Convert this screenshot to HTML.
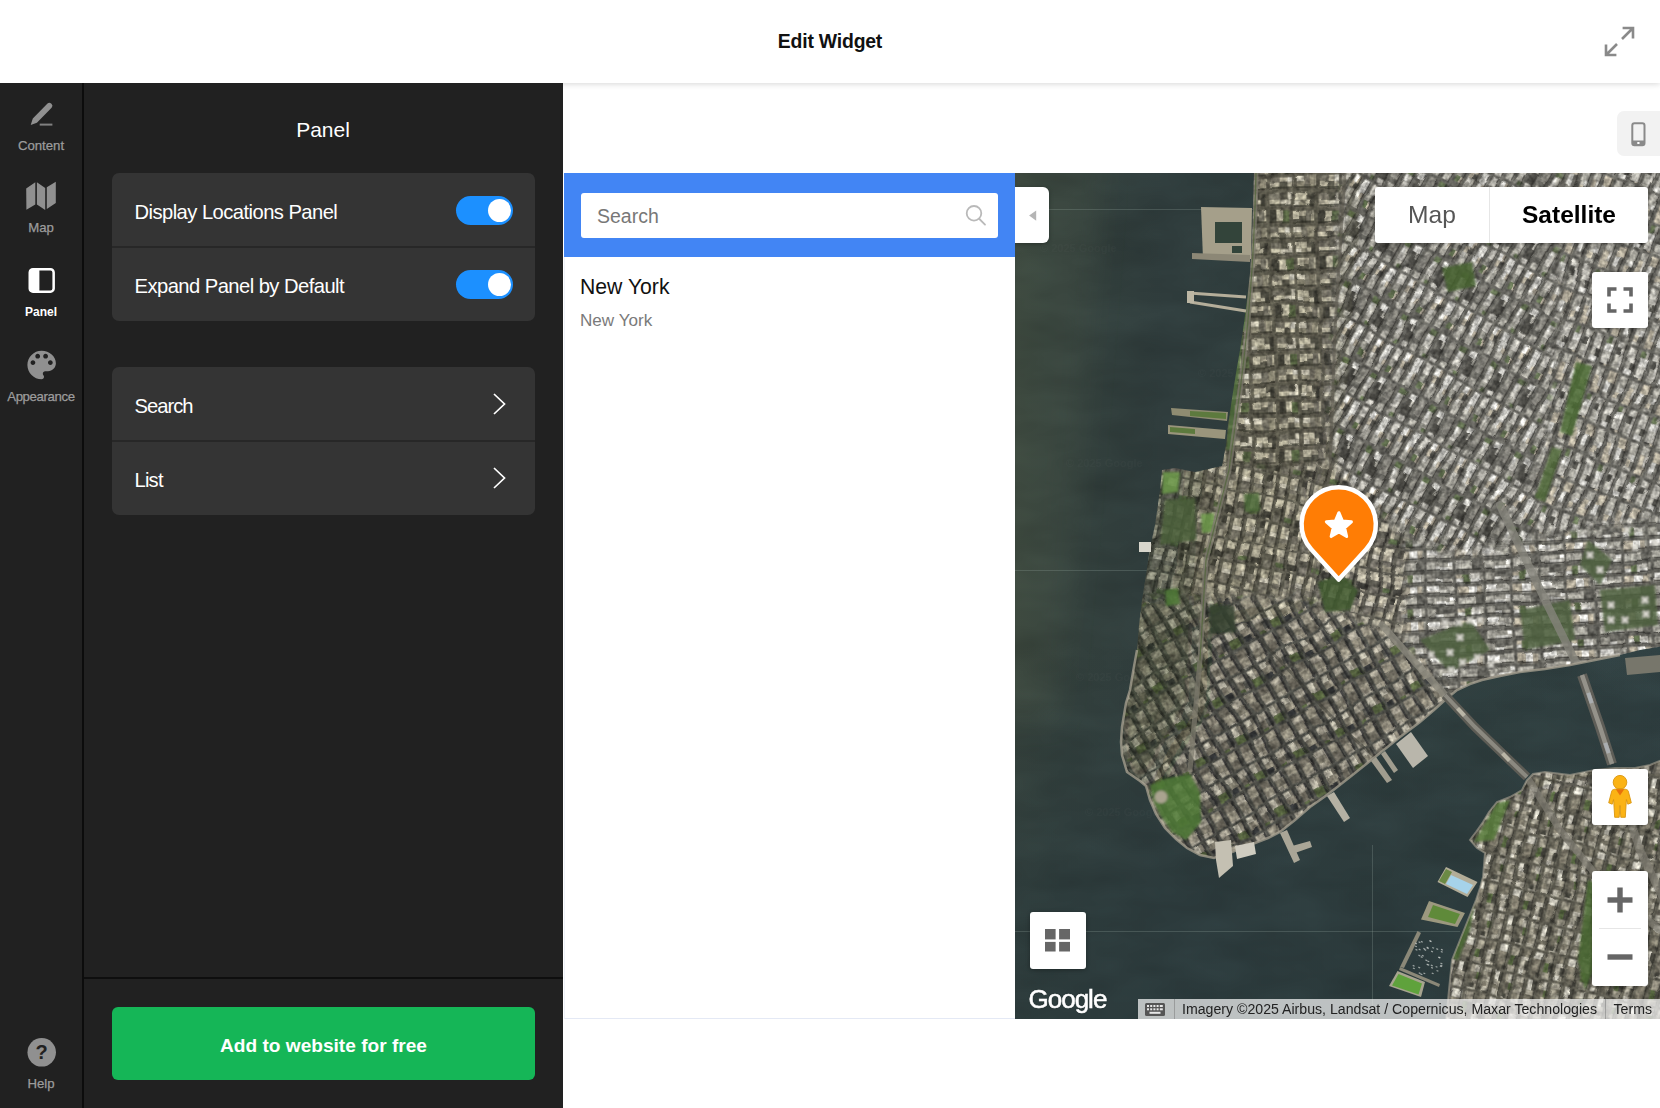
<!DOCTYPE html>
<html lang="en">
<head>
<meta charset="utf-8">
<title>Edit Widget</title>
<style>
*{box-sizing:border-box;margin:0;padding:0}
html,body{width:1660px;height:1108px;overflow:hidden;background:#fff}
body{font-family:"Liberation Sans",sans-serif;position:relative;color:#fff}
.abs{position:absolute}
/* header */
#hdr{left:0;top:0;width:1660px;height:83px;background:#fff;box-shadow:0 1px 6px rgba(0,0,0,.16);z-index:5}
#hdr h1{position:absolute;left:0;width:1660px;top:29px;text-align:center;font-size:19.4px;line-height:24px;font-weight:700;color:#111;letter-spacing:-.2px}
/* sidebar */
#side{left:0;top:83px;width:84px;height:1025px;background:#212121;border-right:2px solid #0c0c0c;z-index:7}
.nav{position:absolute;left:0;width:82px;text-align:center;font-size:13.2px;line-height:16px;color:#9c9c9c;-webkit-text-stroke:.25px #9c9c9c}
.nav.on{color:#fff;font-weight:700;font-size:12px;-webkit-text-stroke:0}
.nav svg{position:absolute;left:0}
/* panel */
#panel{left:83px;top:83px;width:480px;height:1025px;background:#212121;z-index:6}
#panel h2{position:absolute;left:0;width:480px;top:32px;text-align:center;font-size:21px;line-height:30px;font-weight:400;color:#fff}
.card{position:absolute;left:29px;width:423px;height:147.5px;background:#343434;border-radius:7px;overflow:hidden}
.row{position:absolute;left:0;width:423px;height:73px}
.row.r2{top:74px}
.card .sep{position:absolute;left:0;top:73px;width:423px;height:1.5px;background:#272727}
.row span{position:absolute;left:22.5px;top:26px;font-size:20.2px;line-height:26px;color:#fff;white-space:nowrap;letter-spacing:-.55px}
.tog{position:absolute;left:344px;top:22.7px;width:57px;height:29px;border-radius:15px;background:#1c90ff}
.tog i{position:absolute;right:2.5px;top:3px;width:23px;height:23px;border-radius:50%;background:#fff}
.chev{position:absolute;left:380px;top:25px}
#foot{position:absolute;left:0;top:894px;width:480px;height:1.5px;background:#0e0e0e}
#cta{position:absolute;left:29px;top:924px;width:423px;height:73px;border-radius:6px;background:#15b657;color:#fff;font-weight:700;font-size:19.1px;line-height:73px;text-align:center;padding-top:2px}
/* preview */
#mob{left:1616.5px;top:111px;width:50px;height:45px;border-radius:7px;background:#f2f2f2}
#wpanel{left:564px;top:173px;width:451px;height:846px;background:#fff;border-bottom:1px solid #e4e9f5;border-left:1px solid #eef1f8}
#whead{left:564px;top:173px;width:451px;height:84px;background:#4285f4}
#winput{left:581px;top:192.5px;width:417px;height:45px;border-radius:3px;background:#fff}
#winput span{position:absolute;left:16px;top:11px;font-size:19.5px;line-height:24px;color:#777}
#map{left:1015px;top:173px;width:645px;height:846px;overflow:hidden;background:#2f3f3c}
.loc1{left:580px;top:274px;font-size:21.2px;line-height:26px;color:#111;white-space:nowrap}
.loc2{left:580px;top:310.5px;font-size:17.1px;line-height:20px;color:#7a7a7a;white-space:nowrap}
.mbtn{position:absolute;background:#fff;border-radius:3px;box-shadow:0 1px 4px rgba(0,0,0,.3)}
</style>
</head>
<body>
<div id="hdr" class="abs"><h1>Edit Widget</h1>
<svg class="abs" style="left:1603px;top:25px" width="34" height="34" viewBox="0 0 34 34" fill="none" stroke="#8a8a8a" stroke-width="2.6" stroke-linecap="butt" stroke-linejoin="miter"><path d="M19 14 30 3M19.600 3H30V13.400M14 19 3 30M3 19.600V30H13.400"/></svg>
</div>

<div id="side" class="abs">
<svg class="abs" style="left:0;top:0" width="82" height="340" viewBox="0 83 82 340">
<path d="M30.700 124.900 32.800 118.600 47.500 103.600a2.550 2.550 0 0 1 3.600 0l0.500 0.500a2.550 2.550 0 0 1 0 3.600L36.900 122.800z" fill="#909090"/>
<rect x="39.700" y="123.600" width="12.700" height="2" fill="#909090" opacity=".85"/>
<path d="M26.200 188.400 35.300 182.300V204.600L26.400 209.800zM36.900 182.300 45.200 188V210L36.900 204.600zM46.800 187.200 55.800 181.700V203L46.800 209.100z" fill="#909090"/>
<rect x="29.750" y="269.250" width="23.900" height="22.400" rx="3.200" fill="none" stroke="#fff" stroke-width="2.500"/>
<path d="M32 269h7.400v23H32a3 3 0 0 1-3-3v-17a3 3 0 0 1 3-3z" fill="#fff"/>
<g transform="translate(22.650 345.950) scale(1.583)"><path fill="#909090" d="M12 3c-4.970 0-9 4.030-9 9s4.030 9 9 9c.83 0 1.500-.67 1.500-1.500 0-.39-.15-.74-.39-1.010-.23-.26-.38-.61-.38-.99 0-.83.670-1.500 1.500-1.500H16c2.760 0 5-2.240 5-5 0-4.420-4.030-8-9-8zm-5.500 9c-.83 0-1.500-.67-1.500-1.500S5.670 9 6.500 9 8 9.670 8 10.500 7.330 12 6.500 12zm3-4C8.670 8 8 7.330 8 6.500S8.670 5 9.500 5s1.500.67 1.500 1.500S10.330 8 9.500 8zm5 0c-.83 0-1.500-.67-1.500-1.500S13.670 5 14.500 5s1.500.67 1.500 1.500S15.330 8 14.500 8zm3 4c-.83 0-1.500-.67-1.500-1.500S16.670 9 17.500 9s1.500.67 1.500 1.500-.67 1.500-1.500 1.500z"/></g>
</svg>
<div class="nav " style="top:55px;">Content</div>
<div class="nav " style="top:136.5px;">Map</div>
<div class="nav on" style="top:221.3px;">Panel</div>
<div class="nav " style="top:305.5px;letter-spacing:-.35px">Appearance</div>
<svg class="abs" style="left:26px;top:954px" width="32" height="32" viewBox="26 1037 32 32"><circle cx="41.700" cy="1052.350" r="14.250" fill="#909090"/><text x="41.700" y="1059.300" text-anchor="middle" font-family="Liberation Sans, sans-serif" font-weight="700" font-size="20" fill="#212121">?</text></svg>
<div class="nav " style="top:992.5px;">Help</div>
</div>

<div id="panel" class="abs">
<h2>Panel</h2>
<div class="card" style="top:90px">
 <div class="row"><span>Display Locations Panel</span><div class="tog"><i></i></div></div>
 <div class="sep"></div>
 <div class="row r2"><span>Expand Panel by Default</span><div class="tog"><i></i></div></div>
</div>
<div class="card" style="top:284.3px">
 <div class="row"><span style="letter-spacing:-1px">Search</span><svg class="chev" width="16" height="24" viewBox="0 0 16 24" fill="none" stroke="#fff" stroke-width="1.7"><path d="M2 2l10.500 10L2 22"/></svg></div>
 <div class="sep"></div>
 <div class="row r2"><span style="letter-spacing:-.8px">List</span><svg class="chev" width="16" height="24" viewBox="0 0 16 24" fill="none" stroke="#fff" stroke-width="1.7"><path d="M2 2l10.500 10L2 22"/></svg></div>
</div>
<div id="foot"></div>
<div id="cta">Add to website for free</div>
</div>

<div id="mob" class="abs"><svg class="abs" style="left:13px;top:9px" width="18" height="28" viewBox="1630 119 18 28"><rect x="1632.300" y="122.200" width="12.200" height="22" rx="2.200" fill="none" stroke="#8a8a8a" stroke-width="2"/><path d="M1632.300 139.500h12.200v2.500a2.200 2.200 0 0 1-2.200 2.200h-7.800a2.200 2.200 0 0 1-2.200-2.200z" fill="#8a8a8a"/><rect x="1637.300" y="141" width="2.200" height="2" fill="#fff"/></svg></div>
<div id="wpanel" class="abs"></div>
<div id="whead" class="abs"></div>
<div id="winput" class="abs"><span>Search</span><svg class="abs" style="left:382px;top:10px" width="26" height="26" viewBox="963 203 26 26" fill="none" stroke="#b9b9b9" stroke-width="1.8"><circle cx="974" cy="213.300" r="7.300"/><path d="M979.400 219 985 224.600" stroke-linecap="round"/></svg></div>
<div class="abs loc1">New York</div>
<div class="abs loc2">New York</div>

<div id="map" class="abs">
<svg width="645" height="846" viewBox="1015 173 645 846" style="position:absolute;left:0;top:0">
<defs>
<linearGradient id="wv" x1="0" x2="0" y1="0" y2="1"><stop offset="0" stop-color="#2c3a3c" stop-opacity="0"/><stop offset=".55" stop-color="#2c3a3c" stop-opacity="0"/><stop offset=".85" stop-color="#2b3a3c" stop-opacity=".75"/><stop offset="1" stop-color="#2b3a3c" stop-opacity=".85"/></linearGradient><linearGradient id="wg" x1="0" x2="1" y1="0" y2="0"><stop offset="0" stop-color="#39443b"/><stop offset=".1" stop-color="#33403c"/><stop offset=".25" stop-color="#2f3c3c"/><stop offset=".7" stop-color="#2f3e3e"/><stop offset="1" stop-color="#304042"/></linearGradient>
<filter id="nz" x="0" y="0" width="100%" height="100%" color-interpolation-filters="sRGB"><feTurbulence type="fractalNoise" baseFrequency=".02 .02" numOctaves="2" seed="11" result="d"/><feDisplacementMap in="SourceGraphic" in2="d" scale="9" xChannelSelector="R" yChannelSelector="G" result="w"/><feTurbulence type="fractalNoise" baseFrequency=".2 .2" numOctaves="2" seed="4" result="n"/><feColorMatrix in="n" type="matrix" values="1.500 0 0 0 -.25  1.500 0 0 0 -.25  1.500 0 0 0 -.25  0 0 0 0 1" result="g"/><feComposite in="w" in2="g" operator="arithmetic" k1=".6" k2=".68" k3="0" k4="0"/></filter>
<filter id="nzw" x="0" y="0" width="100%" height="100%" color-interpolation-filters="sRGB"><feTurbulence type="fractalNoise" baseFrequency=".012 .03" numOctaves="3" seed="9" result="n"/><feColorMatrix in="n" type="matrix" values="1 0 0 0 0  1 0 0 0 0  1 0 0 0 0  0 0 0 0 1" result="g"/><feComposite in="SourceGraphic" in2="g" operator="arithmetic" k1=".24" k2=".88" k3="0" k4="0"/></filter>
<filter id="bl" x="-20%" y="-20%" width="140%" height="140%"><feGaussianBlur stdDeviation="14"/></filter>
<filter id="bs" x="-20%" y="-20%" width="140%" height="140%"><feGaussianBlur stdDeviation="1.200"/></filter>
<clipPath id="land"><polygon points="1254,170 1253,208 1252,240 1250,273 1247,300 1244,323 1240,350 1236,373 1231,405 1228,425 1226,445 1222,466 1195,472 1175,468 1162,470 1160,490 1155,525 1150,548 1146,575 1142,600 1139,625 1137,650 1133,672 1130,690 1126,703 1122,727 1121,742 1122,755 1127,772 1140,781 1146,786 1150,800 1156,814 1165,828 1176,839 1187,848 1200,855 1214,858 1232,852 1255,843 1268,838 1280,832 1295,820 1310,807 1327,795 1350,777 1375,757 1400,737 1420,722 1434,710 1445,700 1457,690 1470,684 1482,680 1500,676 1520,672 1545,669 1570,665 1595,660 1620,655 1640,650 1664,646 1664,170"/><polygon points="1664,759 1650,765 1635,768 1615,768 1595,770 1570,775 1545,772 1533,774 1527,780 1522,790 1510,797 1497,802 1489,812 1483,822 1476,832 1470,840 1477,848 1485,853 1484,865 1483,877 1480,888 1476,900 1470,915 1464,930 1458,945 1452,960 1449,990 1446,1022 1664,1022"/></clipPath>
<pattern id="g1" width="48" height="48" patternUnits="userSpaceOnUse" patternTransform="rotate(-2 1300 300)"><rect width="48" height="48" fill="#5b584f"/><rect x="1.8" y="1.8" width="5.9" height="6.6" fill="#c2bca9"/><rect x="1.8" y="8.4" width="5.9" height="5.8" fill="#d4cfc0"/><rect x="7.7" y="1.8" width="6.2" height="6.2" fill="#c2bca9"/><rect x="7.7" y="8.0" width="6.2" height="6.2" fill="#8f8a7a"/><rect x="13.9" y="1.8" width="4.4" height="6.0" fill="#57554d"/><rect x="13.9" y="7.8" width="4.4" height="6.4" fill="#c2bca9"/><rect x="18.4" y="1.8" width="3.8" height="12.4" fill="#3f3e39"/><rect x="1.8" y="12.2" width="20.4" height="2" fill="#33322d" opacity=".8"/><rect x="1.8" y="17.8" width="7.5" height="7.4" fill="#c2bca9"/><rect x="1.8" y="25.2" width="7.5" height="5.0" fill="#57554d"/><rect x="9.3" y="17.8" width="5.7" height="5.3" fill="#aca694"/><rect x="9.3" y="23.1" width="5.7" height="7.1" fill="#57554d"/><rect x="15.0" y="17.8" width="5.1" height="12.4" fill="#77736a"/><rect x="20.1" y="17.8" width="2.1" height="5.1" fill="#c2bca9"/><rect x="20.1" y="22.9" width="2.1" height="7.3" fill="#aca694"/><rect x="1.8" y="28.2" width="20.4" height="2" fill="#33322d" opacity=".8"/><rect x="1.8" y="33.8" width="8.1" height="5.7" fill="#d4cfc0"/><rect x="1.8" y="39.5" width="8.1" height="6.7" fill="#8f8a7a"/><rect x="9.9" y="33.8" width="5.8" height="12.4" fill="#77736a"/><rect x="15.7" y="33.8" width="5.5" height="12.4" fill="#8f8a7a"/><rect x="21.1" y="33.8" width="1.1" height="12.4" fill="#aca694"/><rect x="1.8" y="44.2" width="20.4" height="2" fill="#33322d" opacity=".8"/><rect x="25.8" y="1.8" width="9.9" height="6.0" fill="#77736a"/><rect x="25.8" y="7.8" width="9.9" height="6.4" fill="#c2bca9"/><rect x="35.7" y="1.8" width="6.9" height="6.6" fill="#57554d"/><rect x="35.7" y="8.4" width="6.9" height="5.8" fill="#d4cfc0"/><rect x="42.6" y="1.8" width="3.6" height="6.7" fill="#d4cfc0"/><rect x="42.6" y="8.5" width="3.6" height="5.7" fill="#d4cfc0"/><rect x="25.8" y="12.2" width="20.4" height="2" fill="#33322d" opacity=".8"/><rect x="25.8" y="17.8" width="6.7" height="12.4" fill="#3f3e39"/><rect x="32.5" y="17.8" width="6.8" height="12.4" fill="#c2bca9"/><rect x="39.4" y="17.8" width="6.8" height="12.4" fill="#566545"/><rect x="25.8" y="28.2" width="20.4" height="2" fill="#33322d" opacity=".8"/><rect x="25.8" y="33.8" width="8.9" height="5.9" fill="#77736a"/><rect x="25.8" y="39.7" width="8.9" height="6.5" fill="#c2bca9"/><rect x="34.7" y="33.8" width="6.8" height="5.3" fill="#c2bca9"/><rect x="34.7" y="39.1" width="6.8" height="7.1" fill="#57554d"/><rect x="41.5" y="33.8" width="4.7" height="5.9" fill="#e2dfd4"/><rect x="41.5" y="39.7" width="4.7" height="6.5" fill="#c2bca9"/><rect x="25.8" y="44.2" width="20.4" height="2" fill="#33322d" opacity=".8"/></pattern><pattern id="g2" width="33" height="66" patternUnits="userSpaceOnUse" patternTransform="rotate(29 1500 350)"><rect width="33" height="66" fill="#62615b"/><rect x="1.5" y="1.5" width="4.6" height="8.1" fill="#e3e2dd"/><rect x="6.1" y="1.5" width="3.4" height="8.1" fill="#b7af9d"/><rect x="1.5" y="9.6" width="3.8" height="6.9" fill="#b7af9d"/><rect x="5.3" y="9.6" width="4.2" height="6.9" fill="#484742"/><rect x="1.5" y="16.6" width="3.6" height="6.1" fill="#bfbdb5"/><rect x="5.1" y="16.6" width="4.4" height="6.1" fill="#9a988f"/><rect x="1.5" y="22.6" width="3.2" height="8.9" fill="#aba9a0"/><rect x="4.7" y="22.6" width="4.8" height="8.9" fill="#aba9a0"/><rect x="7.7" y="1.5" width="1.8" height="30.0" fill="#32312d" opacity=".8"/><rect x="1.5" y="34.5" width="8.0" height="9.0" fill="#86847c"/><rect x="1.5" y="43.5" width="8.0" height="8.6" fill="#86847c"/><rect x="1.5" y="52.1" width="8.0" height="5.4" fill="#65645e"/><rect x="1.5" y="57.5" width="8.0" height="7.0" fill="#aba9a0"/><rect x="7.7" y="34.5" width="1.8" height="30.0" fill="#32312d" opacity=".8"/><rect x="12.5" y="1.5" width="4.2" height="7.8" fill="#d2d1cb"/><rect x="16.7" y="1.5" width="3.8" height="7.8" fill="#d2d1cb"/><rect x="12.5" y="9.3" width="3.7" height="6.5" fill="#d2d1cb"/><rect x="16.2" y="9.3" width="4.3" height="6.5" fill="#d2d1cb"/><rect x="12.5" y="15.8" width="3.8" height="6.1" fill="#d2d1cb"/><rect x="16.3" y="15.8" width="4.2" height="6.1" fill="#b7af9d"/><rect x="12.5" y="21.8" width="3.6" height="9.3" fill="#aba9a0"/><rect x="16.1" y="21.8" width="4.4" height="9.3" fill="#aba9a0"/><rect x="18.7" y="1.5" width="1.8" height="30.0" fill="#32312d" opacity=".8"/><rect x="12.5" y="34.5" width="8.0" height="5.9" fill="#5c6a4a"/><rect x="12.5" y="40.4" width="3.3" height="8.3" fill="#d2d1cb"/><rect x="15.8" y="40.4" width="4.7" height="8.3" fill="#aba9a0"/><rect x="12.5" y="48.6" width="8.0" height="6.9" fill="#bfbdb5"/><rect x="12.5" y="55.5" width="8.0" height="5.2" fill="#9a988f"/><rect x="12.5" y="60.6" width="3.2" height="3.9" fill="#9a988f"/><rect x="15.7" y="60.6" width="4.8" height="3.9" fill="#5c6a4a"/><rect x="18.7" y="34.5" width="1.8" height="30.0" fill="#32312d" opacity=".8"/><rect x="23.5" y="1.5" width="8.0" height="11.0" fill="#bfbdb5"/><rect x="23.5" y="12.5" width="4.4" height="7.6" fill="#9a988f"/><rect x="27.9" y="12.5" width="3.6" height="7.6" fill="#65645e"/><rect x="23.5" y="20.1" width="4.5" height="7.3" fill="#5c6a4a"/><rect x="28.0" y="20.1" width="3.5" height="7.3" fill="#b7af9d"/><rect x="23.5" y="27.4" width="8.0" height="4.1" fill="#65645e"/><rect x="29.7" y="1.5" width="1.8" height="30.0" fill="#32312d" opacity=".8"/><rect x="23.5" y="34.5" width="3.8" height="6.6" fill="#d2d1cb"/><rect x="27.3" y="34.5" width="4.2" height="6.6" fill="#d2d1cb"/><rect x="23.5" y="41.1" width="4.3" height="7.0" fill="#484742"/><rect x="27.8" y="41.1" width="3.7" height="7.0" fill="#aba9a0"/><rect x="23.5" y="48.0" width="8.0" height="11.6" fill="#484742"/><rect x="23.5" y="59.6" width="3.6" height="4.9" fill="#bfbdb5"/><rect x="27.1" y="59.6" width="4.4" height="4.9" fill="#bfbdb5"/><rect x="29.7" y="34.5" width="1.8" height="30.0" fill="#32312d" opacity=".8"/></pattern><pattern id="g3" width="56" height="36" patternUnits="userSpaceOnUse" patternTransform="rotate(-3 1600 600)"><rect width="56" height="36" fill="#62615b"/><rect x="1.5" y="1.5" width="9.4" height="9.0" fill="#b7af9d"/><rect x="10.9" y="1.5" width="8.4" height="9.0" fill="#e3e2dd"/><rect x="19.2" y="1.5" width="5.6" height="9.0" fill="#b7af9d"/><rect x="24.8" y="1.5" width="1.7" height="9.0" fill="#9a988f"/><rect x="1.5" y="8.7" width="25.0" height="1.8" fill="#34332f" opacity=".8"/><rect x="1.5" y="13.5" width="6.2" height="9.0" fill="#aba9a0"/><rect x="7.7" y="13.5" width="10.6" height="9.0" fill="#aba9a0"/><rect x="18.4" y="13.5" width="7.8" height="9.0" fill="#65645e"/><rect x="1.5" y="20.7" width="25.0" height="1.8" fill="#34332f" opacity=".8"/><rect x="1.5" y="25.5" width="6.2" height="3.9" fill="#b7af9d"/><rect x="1.5" y="29.4" width="6.2" height="5.1" fill="#e3e2dd"/><rect x="7.7" y="25.5" width="6.0" height="9.0" fill="#5c6a4a"/><rect x="13.7" y="25.5" width="9.6" height="4.6" fill="#bfbdb5"/><rect x="13.7" y="30.1" width="9.6" height="4.4" fill="#d2d1cb"/><rect x="23.3" y="25.5" width="3.2" height="9.0" fill="#9a988f"/><rect x="1.5" y="32.7" width="25.0" height="1.8" fill="#34332f" opacity=".8"/><rect x="29.5" y="1.5" width="11.5" height="5.2" fill="#e3e2dd"/><rect x="29.5" y="6.7" width="11.5" height="3.8" fill="#bfbdb5"/><rect x="41.0" y="1.5" width="6.8" height="4.0" fill="#9a988f"/><rect x="41.0" y="5.5" width="6.8" height="5.0" fill="#bfbdb5"/><rect x="47.8" y="1.5" width="6.7" height="5.2" fill="#aba9a0"/><rect x="47.8" y="6.7" width="6.7" height="3.8" fill="#aba9a0"/><rect x="29.5" y="8.7" width="25.0" height="1.8" fill="#34332f" opacity=".8"/><rect x="29.5" y="13.5" width="9.1" height="9.0" fill="#aba9a0"/><rect x="38.6" y="13.5" width="11.4" height="4.6" fill="#9a988f"/><rect x="38.6" y="18.1" width="11.4" height="4.4" fill="#d2d1cb"/><rect x="50.0" y="13.5" width="4.5" height="3.6" fill="#e3e2dd"/><rect x="50.0" y="17.1" width="4.5" height="5.4" fill="#bfbdb5"/><rect x="29.5" y="20.7" width="25.0" height="1.8" fill="#34332f" opacity=".8"/><rect x="29.5" y="25.5" width="8.3" height="9.0" fill="#9a988f"/><rect x="37.8" y="25.5" width="7.3" height="4.6" fill="#65645e"/><rect x="37.8" y="30.1" width="7.3" height="4.4" fill="#d2d1cb"/><rect x="45.1" y="25.5" width="8.9" height="4.1" fill="#65645e"/><rect x="45.1" y="29.6" width="8.9" height="4.9" fill="#9a988f"/><rect x="29.5" y="32.7" width="25.0" height="1.8" fill="#34332f" opacity=".8"/></pattern><pattern id="g4" width="36" height="56" patternUnits="userSpaceOnUse" patternTransform="rotate(14 1550 900)"><rect width="36" height="56" fill="#605e55"/><rect x="1.5" y="1.5" width="9.0" height="7.4" fill="#dedbd0"/><rect x="1.5" y="8.9" width="9.0" height="6.7" fill="#8a8577"/><rect x="1.5" y="15.5" width="9.0" height="7.1" fill="#8a8577"/><rect x="1.5" y="22.6" width="5.3" height="3.9" fill="#6f6b60"/><rect x="6.8" y="22.6" width="3.7" height="3.9" fill="#4b4a44"/><rect x="8.7" y="1.5" width="1.8" height="25.0" fill="#34332f" opacity=".8"/><rect x="1.5" y="29.5" width="4.6" height="9.7" fill="#dedbd0"/><rect x="6.1" y="29.5" width="4.4" height="9.7" fill="#4b4a44"/><rect x="1.5" y="39.2" width="4.4" height="4.8" fill="#b8b3a5"/><rect x="5.9" y="39.2" width="4.6" height="4.8" fill="#a19c8e"/><rect x="1.5" y="44.0" width="9.0" height="4.4" fill="#6f6b60"/><rect x="1.5" y="48.4" width="4.9" height="6.1" fill="#cdc9bc"/><rect x="6.4" y="48.4" width="4.1" height="6.1" fill="#b8b3a5"/><rect x="8.7" y="29.5" width="1.8" height="25.0" fill="#34332f" opacity=".8"/><rect x="13.5" y="1.5" width="9.0" height="9.3" fill="#a19c8e"/><rect x="13.5" y="10.8" width="4.5" height="9.7" fill="#586a42"/><rect x="18.0" y="10.8" width="4.5" height="9.7" fill="#4b4a44"/><rect x="13.5" y="20.5" width="4.5" height="5.0" fill="#a19c8e"/><rect x="18.0" y="20.5" width="4.5" height="5.0" fill="#a19c8e"/><rect x="13.5" y="25.5" width="9.0" height="1.0" fill="#b8b3a5"/><rect x="20.7" y="1.5" width="1.8" height="25.0" fill="#34332f" opacity=".8"/><rect x="13.5" y="29.5" width="3.6" height="7.3" fill="#a19c8e"/><rect x="17.1" y="29.5" width="5.4" height="7.3" fill="#cdc9bc"/><rect x="13.5" y="36.8" width="5.4" height="7.1" fill="#6f6b60"/><rect x="18.9" y="36.8" width="3.6" height="7.1" fill="#586a42"/><rect x="13.5" y="43.9" width="3.7" height="4.6" fill="#6f6b60"/><rect x="17.2" y="43.9" width="5.3" height="4.6" fill="#a19c8e"/><rect x="13.5" y="48.5" width="5.2" height="4.8" fill="#4b4a44"/><rect x="18.7" y="48.5" width="3.8" height="4.8" fill="#a19c8e"/><rect x="13.5" y="53.3" width="9.0" height="1.2" fill="#cdc9bc"/><rect x="20.7" y="29.5" width="1.8" height="25.0" fill="#34332f" opacity=".8"/><rect x="25.5" y="1.5" width="3.7" height="8.2" fill="#6f6b60"/><rect x="29.2" y="1.5" width="5.3" height="8.2" fill="#8a8577"/><rect x="25.5" y="9.7" width="9.0" height="4.4" fill="#cdc9bc"/><rect x="25.5" y="14.1" width="5.1" height="8.8" fill="#b8b3a5"/><rect x="30.6" y="14.1" width="3.9" height="8.8" fill="#4b4a44"/><rect x="25.5" y="22.9" width="4.6" height="3.6" fill="#dedbd0"/><rect x="30.1" y="22.9" width="4.4" height="3.6" fill="#a19c8e"/><rect x="32.7" y="1.5" width="1.8" height="25.0" fill="#34332f" opacity=".8"/><rect x="25.5" y="29.5" width="4.0" height="4.8" fill="#b8b3a5"/><rect x="29.5" y="29.5" width="5.0" height="4.8" fill="#b8b3a5"/><rect x="25.5" y="34.3" width="4.2" height="4.3" fill="#a19c8e"/><rect x="29.7" y="34.3" width="4.8" height="4.3" fill="#6f6b60"/><rect x="25.5" y="38.6" width="3.9" height="5.7" fill="#a19c8e"/><rect x="29.4" y="38.6" width="5.1" height="5.7" fill="#b8b3a5"/><rect x="25.5" y="44.3" width="4.9" height="5.5" fill="#8a8577"/><rect x="30.4" y="44.3" width="4.1" height="5.5" fill="#a19c8e"/><rect x="25.5" y="49.8" width="9.0" height="4.7" fill="#b8b3a5"/><rect x="32.7" y="29.5" width="1.8" height="25.0" fill="#34332f" opacity=".8"/></pattern><pattern id="g5" width="45" height="42" patternUnits="userSpaceOnUse" patternTransform="rotate(-30 1250 700)"><rect width="45" height="42" fill="#54554f"/><rect x="1.4" y="1.4" width="6.1" height="9.9" fill="#c9c4b3"/><rect x="7.5" y="1.4" width="6.1" height="9.9" fill="#8b8677"/><rect x="1.4" y="11.3" width="12.2" height="8.0" fill="#5d6b45"/><rect x="10.8" y="1.4" width="2.8" height="18.2" fill="#2a2c2d" opacity=".8"/><rect x="1.4" y="22.4" width="12.2" height="7.1" fill="#757165"/><rect x="1.4" y="29.5" width="5.7" height="8.8" fill="#a39d8c"/><rect x="7.1" y="29.5" width="6.5" height="8.8" fill="#a39d8c"/><rect x="1.4" y="38.3" width="12.2" height="2.3" fill="#b6b0a0"/><rect x="10.8" y="22.4" width="2.8" height="18.2" fill="#2a2c2d" opacity=".8"/><rect x="16.4" y="1.4" width="6.9" height="6.0" fill="#c9c4b3"/><rect x="23.3" y="1.4" width="5.3" height="6.0" fill="#757165"/><rect x="16.4" y="7.4" width="5.6" height="6.7" fill="#8b8677"/><rect x="22.0" y="7.4" width="6.6" height="6.7" fill="#a39d8c"/><rect x="16.4" y="14.1" width="7.2" height="5.5" fill="#383a3b"/><rect x="23.6" y="14.1" width="5.0" height="5.5" fill="#8b8677"/><rect x="25.8" y="1.4" width="2.8" height="18.2" fill="#2a2c2d" opacity=".8"/><rect x="16.4" y="22.4" width="12.2" height="6.5" fill="#b6b0a0"/><rect x="16.4" y="28.9" width="5.8" height="7.1" fill="#8b8677"/><rect x="22.2" y="28.9" width="6.4" height="7.1" fill="#8b8677"/><rect x="16.4" y="36.0" width="4.9" height="4.6" fill="#b6b0a0"/><rect x="21.3" y="36.0" width="7.3" height="4.6" fill="#a39d8c"/><rect x="25.8" y="22.4" width="2.8" height="18.2" fill="#2a2c2d" opacity=".8"/><rect x="31.4" y="1.4" width="4.9" height="7.4" fill="#b6b0a0"/><rect x="36.3" y="1.4" width="7.3" height="7.4" fill="#b6b0a0"/><rect x="31.4" y="8.8" width="6.7" height="8.5" fill="#757165"/><rect x="38.1" y="8.8" width="5.5" height="8.5" fill="#55554f"/><rect x="31.4" y="17.3" width="5.7" height="2.3" fill="#5d6b45"/><rect x="37.1" y="17.3" width="6.5" height="2.3" fill="#a39d8c"/><rect x="40.8" y="1.4" width="2.8" height="18.2" fill="#2a2c2d" opacity=".8"/><rect x="31.4" y="22.4" width="12.2" height="9.3" fill="#a39d8c"/><rect x="31.4" y="31.7" width="12.2" height="8.9" fill="#757165"/><rect x="40.8" y="22.4" width="2.8" height="18.2" fill="#2a2c2d" opacity=".8"/></pattern><pattern id="g6" width="36" height="48" patternUnits="userSpaceOnUse" patternTransform="rotate(12 1180 560)"><rect width="36" height="48" fill="#5e5c53"/><rect x="1.2" y="1.2" width="9.6" height="7.7" fill="#c2bca9"/><rect x="1.2" y="8.9" width="5.4" height="6.6" fill="#57554d"/><rect x="6.6" y="8.9" width="4.2" height="6.6" fill="#57554d"/><rect x="1.2" y="15.5" width="9.6" height="6.9" fill="#77736a"/><rect x="8.8" y="1.2" width="2" height="21.6" fill="#2f2e2a" opacity=".8"/><rect x="1.2" y="25.2" width="3.9" height="7.5" fill="#c2bca9"/><rect x="5.1" y="25.2" width="5.7" height="7.5" fill="#aca694"/><rect x="1.2" y="32.7" width="9.6" height="4.5" fill="#d4cfc0"/><rect x="1.2" y="37.2" width="9.6" height="7.1" fill="#77736a"/><rect x="1.2" y="44.3" width="5.4" height="2.5" fill="#77736a"/><rect x="6.6" y="44.3" width="4.2" height="2.5" fill="#8f8a7a"/><rect x="8.8" y="25.2" width="2" height="21.6" fill="#2f2e2a" opacity=".8"/><rect x="13.2" y="1.2" width="9.6" height="6.7" fill="#c2bca9"/><rect x="13.2" y="7.9" width="4.0" height="7.7" fill="#aca694"/><rect x="17.2" y="7.9" width="5.6" height="7.7" fill="#77736a"/><rect x="13.2" y="15.6" width="9.6" height="5.0" fill="#566545"/><rect x="13.2" y="20.6" width="4.8" height="2.2" fill="#77736a"/><rect x="18.0" y="20.6" width="4.8" height="2.2" fill="#57554d"/><rect x="20.8" y="1.2" width="2" height="21.6" fill="#2f2e2a" opacity=".8"/><rect x="13.2" y="25.2" width="9.6" height="7.1" fill="#c2bca9"/><rect x="13.2" y="32.3" width="5.3" height="4.7" fill="#aca694"/><rect x="18.5" y="32.3" width="4.3" height="4.7" fill="#d4cfc0"/><rect x="13.2" y="37.0" width="4.4" height="4.1" fill="#77736a"/><rect x="17.6" y="37.0" width="5.2" height="4.1" fill="#77736a"/><rect x="13.2" y="41.1" width="4.8" height="5.7" fill="#8f8a7a"/><rect x="18.0" y="41.1" width="4.8" height="5.7" fill="#8f8a7a"/><rect x="20.8" y="25.2" width="2" height="21.6" fill="#2f2e2a" opacity=".8"/><rect x="25.2" y="1.2" width="9.6" height="4.6" fill="#aca694"/><rect x="25.2" y="5.8" width="9.6" height="8.9" fill="#c2bca9"/><rect x="25.2" y="14.7" width="9.6" height="6.3" fill="#3f3e39"/><rect x="25.2" y="21.0" width="4.2" height="1.8" fill="#3f3e39"/><rect x="29.4" y="21.0" width="5.4" height="1.8" fill="#aca694"/><rect x="32.8" y="1.2" width="2" height="21.6" fill="#2f2e2a" opacity=".8"/><rect x="25.2" y="25.2" width="4.8" height="6.9" fill="#3f3e39"/><rect x="30.0" y="25.2" width="4.8" height="6.9" fill="#c2bca9"/><rect x="25.2" y="32.1" width="5.5" height="8.1" fill="#77736a"/><rect x="30.7" y="32.1" width="4.1" height="8.1" fill="#aca694"/><rect x="25.2" y="40.2" width="3.9" height="6.6" fill="#c2bca9"/><rect x="29.1" y="40.2" width="5.7" height="6.6" fill="#8f8a7a"/><rect x="32.8" y="25.2" width="2" height="21.6" fill="#2f2e2a" opacity=".8"/></pattern><pattern id="g7" width="36" height="60" patternUnits="userSpaceOnUse" patternTransform="rotate(21 1600 300)"><rect width="36" height="60" fill="#62615b"/><rect x="1.5" y="1.5" width="3.9" height="8.2" fill="#aba9a0"/><rect x="5.4" y="1.5" width="5.1" height="8.2" fill="#aba9a0"/><rect x="1.5" y="9.7" width="5.0" height="10.9" fill="#b7af9d"/><rect x="6.5" y="9.7" width="4.0" height="10.9" fill="#bfbdb5"/><rect x="1.5" y="20.5" width="9.0" height="8.0" fill="#b7af9d"/><rect x="8.7" y="1.5" width="1.8" height="27.0" fill="#32312d" opacity=".8"/><rect x="1.5" y="31.5" width="4.3" height="7.0" fill="#5c6a4a"/><rect x="5.8" y="31.5" width="4.7" height="7.0" fill="#9a988f"/><rect x="1.5" y="38.5" width="4.1" height="7.5" fill="#d2d1cb"/><rect x="5.6" y="38.5" width="4.9" height="7.5" fill="#d2d1cb"/><rect x="1.5" y="46.1" width="5.3" height="10.8" fill="#bfbdb5"/><rect x="6.8" y="46.1" width="3.7" height="10.8" fill="#bfbdb5"/><rect x="1.5" y="56.9" width="4.3" height="1.6" fill="#484742"/><rect x="5.8" y="56.9" width="4.7" height="1.6" fill="#b7af9d"/><rect x="8.7" y="31.5" width="1.8" height="27.0" fill="#32312d" opacity=".8"/><rect x="13.5" y="1.5" width="9.0" height="10.7" fill="#b7af9d"/><rect x="13.5" y="12.2" width="4.9" height="11.6" fill="#d2d1cb"/><rect x="18.4" y="12.2" width="4.1" height="11.6" fill="#65645e"/><rect x="13.5" y="23.8" width="9.0" height="4.7" fill="#86847c"/><rect x="20.7" y="1.5" width="1.8" height="27.0" fill="#32312d" opacity=".8"/><rect x="13.5" y="31.5" width="5.3" height="7.0" fill="#bfbdb5"/><rect x="18.8" y="31.5" width="3.7" height="7.0" fill="#9a988f"/><rect x="13.5" y="38.5" width="4.9" height="7.4" fill="#484742"/><rect x="18.4" y="38.5" width="4.1" height="7.4" fill="#bfbdb5"/><rect x="13.5" y="45.9" width="4.6" height="9.6" fill="#aba9a0"/><rect x="18.1" y="45.9" width="4.4" height="9.6" fill="#bfbdb5"/><rect x="13.5" y="55.5" width="5.2" height="3.0" fill="#9a988f"/><rect x="18.7" y="55.5" width="3.8" height="3.0" fill="#bfbdb5"/><rect x="20.7" y="31.5" width="1.8" height="27.0" fill="#32312d" opacity=".8"/><rect x="25.5" y="1.5" width="9.0" height="11.3" fill="#aba9a0"/><rect x="25.5" y="12.8" width="3.8" height="6.0" fill="#aba9a0"/><rect x="29.3" y="12.8" width="5.2" height="6.0" fill="#d2d1cb"/><rect x="25.5" y="18.8" width="4.6" height="6.7" fill="#b7af9d"/><rect x="30.1" y="18.8" width="4.4" height="6.7" fill="#65645e"/><rect x="25.5" y="25.5" width="4.5" height="3.0" fill="#aba9a0"/><rect x="30.0" y="25.5" width="4.5" height="3.0" fill="#aba9a0"/><rect x="32.7" y="1.5" width="1.8" height="27.0" fill="#32312d" opacity=".8"/><rect x="25.5" y="31.5" width="5.3" height="5.4" fill="#bfbdb5"/><rect x="30.8" y="31.5" width="3.7" height="5.4" fill="#9a988f"/><rect x="25.5" y="36.9" width="9.0" height="9.4" fill="#bfbdb5"/><rect x="25.5" y="46.3" width="4.3" height="6.9" fill="#aba9a0"/><rect x="29.8" y="46.3" width="4.7" height="6.9" fill="#484742"/><rect x="25.5" y="53.2" width="9.0" height="5.3" fill="#d2d1cb"/><rect x="32.7" y="31.5" width="1.8" height="27.0" fill="#32312d" opacity=".8"/></pattern></defs>
<g filter="url(#nzw)"><rect x="990" y="148" width="695" height="896" fill="url(#wg)"/><rect x="990" y="148" width="695" height="896" fill="url(#wv)"/><polygon points="990,148 1105,148 1082,450 1058,720 990,720" fill="#535d4b" opacity=".22" filter="url(#bl)"/></g>
<g stroke="#8fa39b" stroke-opacity=".28" stroke-width="1"><path d="M1015 209.500H1260M1015 570.500H1160M1015 931.500H1460M1372.500 845V1019"/></g>
<g clip-path="url(#land)">
<g filter="url(#nz)">
<rect x="990" y="148" width="695" height="896" fill="#8d8b80"/>
<defs><filter id="b6" x="-10%" y="-10%" width="120%" height="120%"><feGaussianBlur stdDeviation="5"/></filter><mask id="mz0" maskUnits="userSpaceOnUse" x="990" y="148" width="695" height="896"><polygon points="1200,160 1352,160 1342,330 1336,470 1110,474" fill="#fff" filter="url(#b6)"/></mask><mask id="mz1" maskUnits="userSpaceOnUse" x="990" y="148" width="695" height="896"><polygon points="1344,160 1575,160 1565,360 1545,545 1470,565 1400,545 1328,470 1334,330" fill="#fff" filter="url(#b6)"/></mask><mask id="mz2" maskUnits="userSpaceOnUse" x="990" y="148" width="695" height="896"><polygon points="1565,160 1680,160 1680,520 1535,545 1555,360" fill="#fff" filter="url(#b6)"/></mask><mask id="mz3" maskUnits="userSpaceOnUse" x="990" y="148" width="695" height="896"><polygon points="1470,555 1540,535 1680,515 1680,660 1450,705 1395,640 1395,540" fill="#fff" filter="url(#b6)"/></mask><mask id="mz4" maskUnits="userSpaceOnUse" x="990" y="148" width="695" height="896"><polygon points="1110,466 1336,466 1405,540 1405,640 1300,606 1110,606" fill="#fff" filter="url(#b6)"/></mask><mask id="mz5" maskUnits="userSpaceOnUse" x="990" y="148" width="695" height="896"><polygon points="1430,745 1680,745 1680,1030 1430,1030" fill="#fff" filter="url(#b6)"/></mask><mask id="mz6" maskUnits="userSpaceOnUse" x="990" y="148" width="695" height="896"><polygon points="1090,596 1300,596 1400,636 1455,700 1300,840 1200,880 1090,790" fill="#fff" filter="url(#b6)"/></mask></defs>
<rect x="990" y="148" width="695" height="896" fill="url(#g6)"/>
<rect x="990" y="148" width="695" height="896" fill="url(#g1)" mask="url(#mz0)"/>
<rect x="990" y="148" width="695" height="896" fill="url(#g2)" mask="url(#mz1)"/>
<rect x="990" y="148" width="695" height="896" fill="url(#g7)" mask="url(#mz2)"/>
<rect x="990" y="148" width="695" height="896" fill="url(#g3)" mask="url(#mz3)"/>
<rect x="990" y="148" width="695" height="896" fill="url(#g6)" mask="url(#mz4)"/>
<rect x="990" y="148" width="695" height="896" fill="url(#g4)" mask="url(#mz5)"/>
<rect x="990" y="148" width="695" height="896" fill="url(#g5)" mask="url(#mz6)"/>
<g filter="url(#bl)">
<polygon points="1220,160 1350,160 1330,420 1300,600 1180,620 1200,400" fill="#5a5038" opacity=".12"/>
<polygon points="1400,160 1680,160 1680,560 1500,520 1380,440" fill="#fff" opacity=".04"/>
<polygon points="1130,600 1300,620 1420,700 1330,800 1230,870 1140,820 1110,720" fill="#1c1b18" opacity=".10"/>
<polygon points="1120,465 1208,465 1203,560 1198,700 1150,790 1110,790" fill="#26331f" opacity=".3"/>
<polygon points="1460,800 1680,760 1680,1030 1440,1030" fill="#4a4632" opacity=".12"/>
</g>
</g>
<g filter="url(#bs)">
<polygon points="1150,785 1168,778 1190,774 1200,792 1201,822 1186,840 1172,832 1160,815 1153,800" fill="#4f7a36" opacity=".85"/>
<polygon points="1318,582 1340,575 1358,590 1350,610 1325,612" fill="#3f5a30" opacity=".85"/>
<polygon points="1163,472 1180,472 1178,492 1162,494" fill="#6c9a4a" opacity=".85"/>
<polygon points="1201,514 1214,513 1215,532 1202,533" fill="#6c9a4a" opacity=".85"/>
<polygon points="1243,200 1250,200 1248,330 1240,332" fill="#4d6b38" opacity=".85"/>
<polygon points="1236,335 1243,335 1232,450 1226,450" fill="#4d6b38" opacity=".85"/>
<polygon points="1442,268 1472,262 1476,286 1448,292" fill="#44602f" opacity=".85"/>
<polygon points="1576,362 1592,366 1572,436 1560,432" fill="#4a6a34" opacity=".85"/>
<polygon points="1552,447 1562,450 1545,502 1535,498" fill="#4d6637" opacity=".85"/>
<polygon points="1588,540 1612,560 1600,585 1580,565" fill="#4f6140" opacity=".85"/>
<polygon points="1420,640 1470,620 1490,650 1450,672" fill="#4f6140" opacity=".85"/>
<polygon points="1520,610 1570,600 1575,640 1525,650" fill="#4f6140" opacity=".85"/>
<polygon points="1600,590 1655,585 1658,625 1605,632" fill="#4f6140" opacity=".85"/>
<polygon points="1497,803 1510,800 1494,840 1474,842" fill="#557a3a" opacity=".85"/>
<polygon points="1470,846 1482,852 1470,930 1458,960 1452,958" fill="#4a6a34" opacity=".85"/>
<polygon points="1588,880 1602,885 1598,960 1585,990 1578,960" fill="#4a6a34" opacity=".85"/>
<polygon points="1244,494 1259,493 1260,511 1245,512" fill="#4d6b38" opacity=".85"/>
<polygon points="1209,604 1234,606 1236,632 1210,634" fill="#34402f" opacity=".85"/>
<polygon points="1165,500 1195,498 1196,540 1160,545" fill="#4a5f3a" opacity=".85"/>
<polygon points="1165,590 1178,588 1180,604 1166,606" fill="#4f7a36" opacity=".85"/>
<circle cx="1161" cy="797" r="6.500" fill="#a9a38f"/>
<g transform="translate(1431 655)" fill="#dcdad2"><rect x="-4" y="-1.200" width="8" height="2.400" transform="rotate(45)"/><rect x="-4" y="-1.200" width="8" height="2.400" transform="rotate(-45)"/></g>
<g transform="translate(1450 652.5)" fill="#dcdad2"><rect x="-4" y="-1.200" width="8" height="2.400" transform="rotate(45)"/><rect x="-4" y="-1.200" width="8" height="2.400" transform="rotate(-45)"/></g>
<g transform="translate(1460 637.5)" fill="#dcdad2"><rect x="-4" y="-1.200" width="8" height="2.400" transform="rotate(45)"/><rect x="-4" y="-1.200" width="8" height="2.400" transform="rotate(-45)"/></g>
<g transform="translate(1470 620)" fill="#dcdad2"><rect x="-4" y="-1.200" width="8" height="2.400" transform="rotate(45)"/><rect x="-4" y="-1.200" width="8" height="2.400" transform="rotate(-45)"/></g>
<g transform="translate(1480 620)" fill="#dcdad2"><rect x="-4" y="-1.200" width="8" height="2.400" transform="rotate(45)"/><rect x="-4" y="-1.200" width="8" height="2.400" transform="rotate(-45)"/></g>
<g transform="translate(1445 622.5)" fill="#dcdad2"><rect x="-4" y="-1.200" width="8" height="2.400" transform="rotate(45)"/><rect x="-4" y="-1.200" width="8" height="2.400" transform="rotate(-45)"/></g>
<g transform="translate(1458.75 622.5)" fill="#dcdad2"><rect x="-4" y="-1.200" width="8" height="2.400" transform="rotate(45)"/><rect x="-4" y="-1.200" width="8" height="2.400" transform="rotate(-45)"/></g>
<g transform="translate(1462.5 662.5)" fill="#dcdad2"><rect x="-4" y="-1.200" width="8" height="2.400" transform="rotate(45)"/><rect x="-4" y="-1.200" width="8" height="2.400" transform="rotate(-45)"/></g>
<g transform="translate(1477.5 657.5)" fill="#dcdad2"><rect x="-4" y="-1.200" width="8" height="2.400" transform="rotate(45)"/><rect x="-4" y="-1.200" width="8" height="2.400" transform="rotate(-45)"/></g>
<g transform="translate(1491 665)" fill="#dcdad2"><rect x="-4" y="-1.200" width="8" height="2.400" transform="rotate(45)"/><rect x="-4" y="-1.200" width="8" height="2.400" transform="rotate(-45)"/></g>
<g transform="translate(1451 670)" fill="#dcdad2"><rect x="-4" y="-1.200" width="8" height="2.400" transform="rotate(45)"/><rect x="-4" y="-1.200" width="8" height="2.400" transform="rotate(-45)"/></g>
<g transform="translate(1611 605)" fill="#dcdad2"><rect x="-4" y="-1.200" width="8" height="2.400" transform="rotate(45)"/><rect x="-4" y="-1.200" width="8" height="2.400" transform="rotate(-45)"/></g>
<g transform="translate(1645 600)" fill="#dcdad2"><rect x="-4" y="-1.200" width="8" height="2.400" transform="rotate(45)"/><rect x="-4" y="-1.200" width="8" height="2.400" transform="rotate(-45)"/></g>
<g transform="translate(1611 620)" fill="#dcdad2"><rect x="-4" y="-1.200" width="8" height="2.400" transform="rotate(45)"/><rect x="-4" y="-1.200" width="8" height="2.400" transform="rotate(-45)"/></g>
<g transform="translate(1646 614)" fill="#dcdad2"><rect x="-4" y="-1.200" width="8" height="2.400" transform="rotate(45)"/><rect x="-4" y="-1.200" width="8" height="2.400" transform="rotate(-45)"/></g>
<g transform="translate(1625 620)" fill="#dcdad2"><rect x="-4" y="-1.200" width="8" height="2.400" transform="rotate(45)"/><rect x="-4" y="-1.200" width="8" height="2.400" transform="rotate(-45)"/></g>
<g transform="translate(1627.5 530)" fill="#dcdad2"><rect x="-4" y="-1.200" width="8" height="2.400" transform="rotate(45)"/><rect x="-4" y="-1.200" width="8" height="2.400" transform="rotate(-45)"/></g>
<g transform="translate(1635 547.5)" fill="#dcdad2"><rect x="-4" y="-1.200" width="8" height="2.400" transform="rotate(45)"/><rect x="-4" y="-1.200" width="8" height="2.400" transform="rotate(-45)"/></g>
<g transform="translate(1655 542.5)" fill="#dcdad2"><rect x="-4" y="-1.200" width="8" height="2.400" transform="rotate(45)"/><rect x="-4" y="-1.200" width="8" height="2.400" transform="rotate(-45)"/></g>
<g transform="translate(1600 570)" fill="#dcdad2"><rect x="-4" y="-1.200" width="8" height="2.400" transform="rotate(45)"/><rect x="-4" y="-1.200" width="8" height="2.400" transform="rotate(-45)"/></g>
<g transform="translate(1590 555)" fill="#dcdad2"><rect x="-4" y="-1.200" width="8" height="2.400" transform="rotate(45)"/><rect x="-4" y="-1.200" width="8" height="2.400" transform="rotate(-45)"/></g>
</g>
<g fill="none" stroke-linecap="round">
<path d="M1256 173C1254 260 1249 330 1236 420L1229 470 1206 560 1200 660 1190 770" stroke="#7c796c" stroke-width="5" opacity=".75"/><path d="M1256 173C1254 260 1249 330 1236 420L1229 470 1206 560 1200 660" stroke="#55683f" stroke-width="1.200" opacity=".8"/>
<path d="M1345 173 1335 330 1330 470 1310 600" stroke="#5b594f" stroke-width="3" opacity=".6"/>
<path d="M1382 625 1420 668 1445 695" stroke="#8a877c" stroke-width="7" opacity=".8"/>
<path d="M1500 505 1545 600 1582 675" stroke="#85837a" stroke-width="8" opacity=".8"/>
<path d="M1527 777 1560 830 1600 880 1660 930" stroke="#7d7a70" stroke-width="7" opacity=".7"/>
<path d="M1612 764 1640 850 1664 900" stroke="#7d7a70" stroke-width="8" opacity=".7"/>
<path d="M1260 640C1300 680 1330 720 1375 757" stroke="#3a3934" stroke-width="3" opacity=".5"/>
</g>
</g>
<polyline points="1137,650 1133,672 1130,690 1126,703 1122,727 1121,742 1122,755 1127,772 1140,781 1146,786 1150,800 1156,814 1165,828 1176,839 1187,848 1200,855 1214,858 1232,852 1255,843 1268,838 1280,832 1295,820 1310,807 1327,795 1350,777 1375,757 1400,737 1420,722 1434,710 1445,700 1457,690 1470,684 1482,680 1500,676 1520,672 1545,669 1570,665 1595,660 1620,655" fill="none" stroke="#a8a292" stroke-width="2.500" opacity=".75"/>
<polyline points="1664,759 1650,765 1635,768 1615,768 1595,770 1570,775 1545,772 1533,774 1527,780 1522,790 1510,797 1497,802 1489,812 1483,822 1476,832 1470,840 1477,848 1485,853 1484,865 1483,877 1480,888 1476,900 1470,915 1464,930 1458,945 1452,960 1449,990 1446,1022" fill="none" stroke="#a8a292" stroke-width="2" opacity=".6"/>
<g>
<polygon points="1201,207 1252,208 1251,259 1203,259" fill="#a59f8a"/><rect x="1215" y="222" width="27" height="21" fill="#33443a"/><polygon points="1192,253 1250,255 1250,262 1192,259" fill="#8c8776"/><rect x="1232" y="246" width="10" height="7" fill="#33443a"/>
<path d="M1189 293 1246 297M1190 302 1246 311" stroke="#b5ae9a" stroke-width="3.200" fill="none"/><rect x="1187" y="291" width="7" height="12" fill="#bdb7a4"/>
<polygon points="1171,408 1228,412 1227,421 1172,415" fill="#8f8c72"/><polygon points="1190,411 1226,413 1226,419 1190,416" fill="#5d7a3e"/>
<polygon points="1168,425 1226,430 1225,439 1168,434" fill="#9a957c"/><polygon points="1170,427 1195,429 1195,434 1170,432" fill="#5d7a3e"/>
<rect x="1139" y="542" width="12" height="10" fill="#d8d6cc"/>
<polygon points="1215,842 1231,840 1233,866 1219,878 1216,860" fill="#c4c0b2"/><polygon points="1235,846 1254,842 1256,854 1237,859" fill="#cfccc0"/>
<polygon points="1280,833 1287,830 1300,860 1294,863" fill="#aaa697"/><polygon points="1292,846 1310,841 1312,847 1295,853" fill="#aaa697"/>
<polygon points="1327,796 1334,792 1350,818 1344,822" fill="#b5b1a3"/>
<polygon points="1371,761 1376,757 1392,780 1387,783" fill="#a19d8f"/><polygon points="1381,754 1385,751 1398,770 1394,773" fill="#a19d8f"/>
<polygon points="1396,744 1411,732 1428,756 1413,768" fill="#b9b6ab"/>
<polygon points="1625,658 1660,655 1660,672 1627,675" fill="#77766b"/>
<polygon points="1437.500,882 1446,867 1477.500,882 1467.500,897" fill="#b3ad98"/><polygon points="1451,875 1473,885 1467,894 1446,884" fill="#a6d3ea"/><polygon points="1439,881 1446,869 1452,872 1445,884" fill="#6b8a45"/>
<polygon points="1421,919.500 1429,901 1465,913 1457.500,927" fill="#9c987f"/><polygon points="1428,917 1433,905 1460,914 1455,924" fill="#5f8a3a"/>
<polygon points="1400,967 1417.500,931 1421,933 1404,968" fill="#8b8878"/><polygon points="1400,967 1440,984 1439,987 1399,970" fill="#8b8878"/>
<polygon points="1389,986 1397.500,971 1425,982 1421,997" fill="#a7a48f"/><polygon points="1392,985.500 1398.500,974 1422,983.500 1418.500,994.500" fill="#5fa23c"/>
</g>
<rect x="1413.0" y="964.8" width="2" height="1.200" fill="#cfd3d0" opacity=".7" transform="rotate(25 1413.0 964.8)"/>
<rect x="1438.9" y="956.6" width="2" height="1.200" fill="#cfd3d0" opacity=".7" transform="rotate(25 1438.9 956.6)"/>
<rect x="1429.6" y="940.0" width="2" height="1.200" fill="#cfd3d0" opacity=".7" transform="rotate(25 1429.6 940.0)"/>
<rect x="1423.7" y="972.4" width="2" height="1.200" fill="#cfd3d0" opacity=".7" transform="rotate(25 1423.7 972.4)"/>
<rect x="1436.8" y="969.9" width="2" height="1.200" fill="#cfd3d0" opacity=".7" transform="rotate(25 1436.8 969.9)"/>
<rect x="1441.2" y="948.7" width="2" height="1.200" fill="#cfd3d0" opacity=".7" transform="rotate(25 1441.2 948.7)"/>
<rect x="1415.3" y="945.4" width="2" height="1.200" fill="#cfd3d0" opacity=".7" transform="rotate(25 1415.3 945.4)"/>
<rect x="1427.7" y="963.9" width="2" height="1.200" fill="#cfd3d0" opacity=".7" transform="rotate(25 1427.7 963.9)"/>
<rect x="1440.2" y="965.3" width="2" height="1.200" fill="#cfd3d0" opacity=".7" transform="rotate(25 1440.2 965.3)"/>
<rect x="1431.4" y="966.8" width="2" height="1.200" fill="#cfd3d0" opacity=".7" transform="rotate(25 1431.4 966.8)"/>
<rect x="1425.7" y="959.3" width="2" height="1.200" fill="#cfd3d0" opacity=".7" transform="rotate(25 1425.7 959.3)"/>
<rect x="1413.2" y="967.4" width="2" height="1.200" fill="#cfd3d0" opacity=".7" transform="rotate(25 1413.2 967.4)"/>
<rect x="1419.0" y="972.2" width="2" height="1.200" fill="#cfd3d0" opacity=".7" transform="rotate(25 1419.0 972.2)"/>
<rect x="1431.4" y="950.6" width="2" height="1.200" fill="#cfd3d0" opacity=".7" transform="rotate(25 1431.4 950.6)"/>
<rect x="1415.8" y="948.8" width="2" height="1.200" fill="#cfd3d0" opacity=".7" transform="rotate(25 1415.8 948.8)"/>
<rect x="1431.1" y="964.5" width="2" height="1.200" fill="#cfd3d0" opacity=".7" transform="rotate(25 1431.1 964.5)"/>
<rect x="1415.4" y="942.5" width="2" height="1.200" fill="#cfd3d0" opacity=".7" transform="rotate(25 1415.4 942.5)"/>
<rect x="1427.7" y="960.4" width="2" height="1.200" fill="#cfd3d0" opacity=".7" transform="rotate(25 1427.7 960.4)"/>
<rect x="1423.6" y="947.8" width="2" height="1.200" fill="#cfd3d0" opacity=".7" transform="rotate(25 1423.6 947.8)"/>
<rect x="1430.0" y="940.4" width="2" height="1.200" fill="#cfd3d0" opacity=".7" transform="rotate(25 1430.0 940.4)"/>
<rect x="1421.0" y="956.1" width="2" height="1.200" fill="#cfd3d0" opacity=".7" transform="rotate(25 1421.0 956.1)"/>
<rect x="1440.8" y="962.6" width="2" height="1.200" fill="#cfd3d0" opacity=".7" transform="rotate(25 1440.8 962.6)"/>
<rect x="1438.5" y="956.6" width="2" height="1.200" fill="#cfd3d0" opacity=".7" transform="rotate(25 1438.5 956.6)"/>
<rect x="1419.0" y="948.6" width="2" height="1.200" fill="#cfd3d0" opacity=".7" transform="rotate(25 1419.0 948.6)"/>
<rect x="1440.8" y="964.7" width="2" height="1.200" fill="#cfd3d0" opacity=".7" transform="rotate(25 1440.8 964.7)"/>
<rect x="1421.2" y="940.8" width="2" height="1.200" fill="#cfd3d0" opacity=".7" transform="rotate(25 1421.2 940.8)"/>
<rect x="1426.9" y="963.6" width="2" height="1.200" fill="#cfd3d0" opacity=".7" transform="rotate(25 1426.9 963.6)"/>
<rect x="1424.6" y="949.0" width="2" height="1.200" fill="#cfd3d0" opacity=".7" transform="rotate(25 1424.6 949.0)"/>
<rect x="1432.0" y="972.4" width="2" height="1.200" fill="#cfd3d0" opacity=".7" transform="rotate(25 1432.0 972.4)"/>
<rect x="1418.8" y="941.2" width="2" height="1.200" fill="#cfd3d0" opacity=".7" transform="rotate(25 1418.8 941.2)"/>
<rect x="1422.1" y="954.7" width="2" height="1.200" fill="#cfd3d0" opacity=".7" transform="rotate(25 1422.1 954.7)"/>
<rect x="1432.5" y="946.9" width="2" height="1.200" fill="#cfd3d0" opacity=".7" transform="rotate(25 1432.5 946.9)"/>
<rect x="1435.9" y="965.9" width="2" height="1.200" fill="#cfd3d0" opacity=".7" transform="rotate(25 1435.9 965.9)"/>
<rect x="1427.1" y="947.2" width="2" height="1.200" fill="#cfd3d0" opacity=".7" transform="rotate(25 1427.1 947.2)"/>
<rect x="1441.1" y="950.9" width="2" height="1.200" fill="#cfd3d0" opacity=".7" transform="rotate(25 1441.1 950.9)"/>
<rect x="1436.6" y="948.1" width="2" height="1.200" fill="#cfd3d0" opacity=".7" transform="rotate(25 1436.6 948.1)"/>
<rect x="1418.6" y="966.6" width="2" height="1.200" fill="#cfd3d0" opacity=".7" transform="rotate(25 1418.6 966.6)"/>
<rect x="1420.8" y="973.3" width="2" height="1.200" fill="#cfd3d0" opacity=".7" transform="rotate(25 1420.8 973.3)"/>
<rect x="1426.9" y="946.6" width="2" height="1.200" fill="#cfd3d0" opacity=".7" transform="rotate(25 1426.9 946.6)"/>
<rect x="1418.7" y="954.6" width="2" height="1.200" fill="#cfd3d0" opacity=".7" transform="rotate(25 1418.7 954.6)"/>
<g fill="none">
<path d="M1445 695 1475 727 1527 777" stroke="#5d5c55" stroke-width="9"/><path d="M1445 695 1475 727 1527 777" stroke="#8b8980" stroke-width="4"/>
<path d="M1582 675 1600 727 1612 764" stroke="#5f5e58" stroke-width="10"/><path d="M1582 675 1600 727 1612 764" stroke="#94928a" stroke-width="4.500"/>
<rect x="-5" y="-2" width="10" height="4" fill="#b9b5a6" transform="translate(1461 712) rotate(47)"/><rect x="-5" y="-2" width="10" height="4" fill="#b9b5a6" transform="translate(1506 757) rotate(47)"/><rect x="-5.500" y="-2" width="11" height="4" fill="#a9adb0" transform="translate(1590 698) rotate(72)"/><rect x="-5.500" y="-2" width="11" height="4" fill="#a9adb0" transform="translate(1607 748) rotate(72)"/>
</g>
<g font-family="Liberation Sans, sans-serif" font-size="11" font-weight="700" fill="#fff" opacity=".02"><text x="1040" y="252">© 2025 Google</text><text x="1198" y="377">© 2025 Google</text><text x="1066" y="467">© 2025 Google</text><text x="1076" y="681">© 2025 Google</text><text x="1085" y="816">© 2025 Google</text></g>
</svg>
<div class="abs" style="left:0;top:13.600px;width:34px;height:56.700px;background:#fff;border-radius:0 6px 6px 0;box-shadow:0 1px 4px rgba(0,0,0,.3)"><svg class="abs" style="left:13px;top:22px" width="10" height="14" viewBox="0 0 10 14"><path d="M8.200 1.500v10.200L1.100 6.600z" fill="#b5b5b5"/></svg></div>
<div class="mbtn" style="left:360px;top:14px;width:273px;height:56px"><div class="abs" style="left:114px;top:0;width:1px;height:56px;background:#e6e6e6"></div><div class="abs" style="left:0;top:0;width:114px;line-height:56px;text-align:center;font-size:24.600px;color:#565656">Map</div><div class="abs" style="left:115px;top:0;width:158px;line-height:56px;text-align:center;font-size:24.500px;font-weight:700;color:#000">Satellite</div></div>
<div class="mbtn" style="left:577px;top:99px;width:56px;height:56px"><svg class="abs" style="left:15px;top:15px" width="26" height="26" viewBox="0 0 26 26" fill="none" stroke="#666" stroke-width="3.600"><path d="M2 9.500V2h7.500M16.500 2H24v7.500M24 16.500V24h-7.500M9.500 24H2v-7.500"/></svg></div>
<div class="mbtn" style="left:577px;top:596px;width:56px;height:56px"><svg class="abs" style="left:14px;top:5px" width="28" height="46" viewBox="0 0 28 46"><ellipse cx="14" cy="8.300" rx="6.800" ry="6.900" fill="#fbb315" stroke="#d9950f" stroke-width=".9"/><path d="M5.500 18C5.500 15.800 8 14.800 14 14.800S22.500 15.800 22.500 18L25.300 28.800 21.800 30.200 20.400 25.500 19.300 43.300H14.800L14 31.500 13.200 43.300H8.700L7.600 25.500 6.200 30.200 2.700 28.800z" fill="#fbb315" stroke="#d9950f" stroke-width=".9" stroke-linejoin="round"/><path d="M9.800 15.300 14 21.500 18.200 15.300z" fill="#e8710a"/></svg></div>
<div class="mbtn" style="left:577px;top:698px;width:56px;height:115px"><div class="abs" style="left:7px;top:56.500px;width:42px;height:1.400px;background:#e6e6e6"></div><svg class="abs" style="left:15px;top:15.500px" width="26" height="26" viewBox="0 0 26 26" fill="#666"><rect x="0.500" y="10.300" width="25" height="5.400"/><rect x="10.300" y="0.500" width="5.400" height="25"/></svg><svg class="abs" style="left:15px;top:72.500px" width="26" height="26" viewBox="0 0 26 26" fill="#666"><rect x="0.500" y="10.300" width="25" height="5.400"/></svg></div>
<div class="mbtn" style="left:14.700px;top:739px;width:56.500px;height:57px"><svg class="abs" style="left:15.400px;top:17.300px" width="26" height="23" viewBox="0 0 26 23" fill="#666"><rect x="0" y="0" width="10.600" height="10.400"/><rect x="14.100" y="0" width="10.900" height="10.400"/><rect x="0" y="12.900" width="10.600" height="9.600"/><rect x="14.100" y="12.900" width="10.900" height="9.600"/></svg></div>
<div class="abs" id="glogo" style="left:13.500px;top:808.600px;font-size:26px;line-height:34px;color:#fff;letter-spacing:-1px;-webkit-text-stroke:.55px #fff;text-shadow:0 0 1.500px rgba(0,0,0,.45)">Google</div>
<div class="abs" style="left:123px;top:826px;width:522px;height:20px;background:rgba(245,245,245,.72)"></div>
<svg class="abs" style="left:130px;top:830px" width="20" height="13" viewBox="0 0 20 13"><rect x="0" y="0" width="20" height="13" rx="1.500" fill="#555"/><g fill="#e8e8e8"><rect x="2" y="2" width="2" height="2"/><rect x="5.200" y="2" width="2" height="2"/><rect x="8.400" y="2" width="2" height="2"/><rect x="11.600" y="2" width="2" height="2"/><rect x="14.800" y="2" width="3" height="2"/><rect x="2" y="5.300" width="2" height="2"/><rect x="5.200" y="5.300" width="2" height="2"/><rect x="8.400" y="5.300" width="2" height="2"/><rect x="11.600" y="5.300" width="2" height="2"/><rect x="14.800" y="5.300" width="3" height="2"/><rect x="4.500" y="8.800" width="11" height="2"/></g></svg>
<div class="abs" style="left:159px;top:826px;width:1px;height:20px;background:rgba(120,120,120,.5)"></div>
<div class="abs" style="left:590px;top:826px;width:1px;height:20px;background:rgba(120,120,120,.5)"></div>
<div class="abs" id="attr" style="left:167px;top:826px;font-size:14.150px;line-height:21px;color:#222;white-space:nowrap">Imagery ©2025 Airbus, Landsat / Copernicus, Maxar Technologies</div>
<div class="abs" id="terms" style="left:598.500px;top:826px;font-size:14.150px;line-height:21px;color:#222;white-space:nowrap">Terms</div>
<svg class="abs" style="left:282px;top:308px" width="84" height="106" viewBox="1297 481 84 106"><path d="M1311.19 549.26A37.15 37.15 0 1 1 1366.21 549.26L1338.7 579.58z" fill="#ff7d05" stroke="#fff" stroke-width="4.500" stroke-linejoin="round"/><path transform="translate(1338.9 525.9)" d="M0.00 -13.20 L3.57 -4.91 L12.55 -4.08 L5.77 1.88 L7.76 10.68 L0.00 6.07 L-7.76 10.68 L-5.77 1.88 L-12.55 -4.08 L-3.57 -4.91z" fill="#fff" stroke="#fff" stroke-width="3" stroke-linejoin="round"/></svg>
</div>
</body>
</html>
